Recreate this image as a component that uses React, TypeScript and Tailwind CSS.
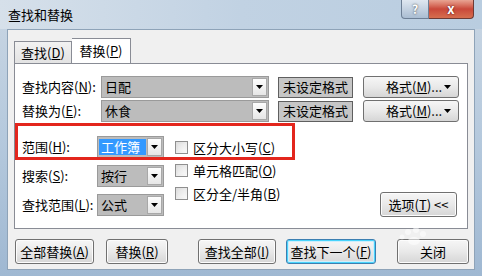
const font = { fontFamily: '"Noto Sans CJK SC", "Liberation Sans", sans-serif' };

function Arrow() {
  return (
    <svg width="7" height="4" viewBox="0 0 7 4" className="shrink-0">
      <path d="M0 0h7L3.5 4z" fill="#000" />
    </svg>
  );
}

function Combo({ text, width }: { text: string; width: string }) {
  return (
    <div className={`flex h-[22px] ${width} border border-[#9a9a9a] bg-[#bcbcbc]`}>
      <div className="flex flex-1 items-center px-[3px] text-[13px] text-black">{text}</div>
      <div className="my-[1px] mr-[1px] flex w-[15px] items-center justify-center border border-[#a8a8a8] bg-gradient-to-b from-[#fdfdfd] to-[#e6e6e6]">
        <Arrow />
      </div>
    </div>
  );
}

function Select({ text, selected }: { text: string; selected?: boolean }) {
  return (
    <div className="flex h-[22px] w-[67px] border border-[#9a9a9a] bg-[#bcbcbc]">
      <div className="flex flex-1 items-center px-[1px]">
        {selected ? (
          <span className="flex h-[16px] w-full items-center bg-[#3399ff] px-[2px] text-[13px] text-white">{text}</span>
        ) : (
          <span className="px-[2px] text-[13px] text-black">{text}</span>
        )}
      </div>
      <div className="my-[1px] mr-[1px] flex w-[15px] items-center justify-center border border-[#a8a8a8] bg-gradient-to-b from-[#fdfdfd] to-[#e6e6e6]">
        <Arrow />
      </div>
    </div>
  );
}

function Button({ children, width, focus }: { children: React.ReactNode; width: string; focus?: boolean }) {
  return (
    <div
      className={`flex h-[25px] ${width} items-center justify-center rounded-[3px] border bg-gradient-to-b from-[#f6f6f6] via-[#e9e9e9] to-[#d6d6d6] text-[13px] text-black ${
        focus
          ? "border-[#3c7fb1] shadow-[inset_0_0_0_1px_#48d3fb,inset_0_0_0_2px_#cdeefc]"
          : "border-[#707070] shadow-[inset_0_0_0_1px_#fcfcfc]"
      }`}
    >
      {children}
    </div>
  );
}

function Check({ children }: { children: React.ReactNode }) {
  return (
    <div className="flex h-[23px] items-center gap-[5px]">
      <div className="h-[13px] w-[13px] border border-[#8f8f8f] bg-gradient-to-br from-[#dcdcdc] to-[#fafafa] p-[2px]">
        <div className="h-full w-full bg-gradient-to-br from-[#e4e4e4] to-[#f7f7f7]" />
      </div>
      <span className="text-[13px] text-black">{children}</span>
    </div>
  );
}

export default function App() {
  return (
    <div className="relative h-[276px] w-[482px] overflow-hidden bg-gradient-to-b from-[#c9d6e3] via-[#b5c9dd] to-[#9fb8d2]" style={font}>
      {/* title bar */}
      <div className="flex h-[29px] items-start bg-gradient-to-r from-[#d6e0ea] via-[#c1d2e3] to-[#b9cde0]">
        <span className="ml-[8px] mt-[5px] text-[13px] text-black">查找和替换</span>
        <div className="ml-auto mr-[8px] flex">
          <div className="flex h-[19px] w-[28px] items-center justify-center rounded-bl-[4px] border border-t-0 border-[#6d7f95] bg-gradient-to-b from-[#dfe7f0] to-[#aabdd2] text-[12px] font-bold text-white [text-shadow:0_0_2px_#333]">
            ?
          </div>
          <div className="flex h-[19px] w-[45px] items-center justify-center rounded-br-[4px] border border-l-0 border-t-0 border-[#6e3b35] bg-gradient-to-b from-[#e8a493] via-[#c9483a] to-[#d66e4f] text-[13px] font-bold text-white [text-shadow:0_0_2px_#400]">
            x
          </div>
        </div>
      </div>

      {/* body */}
      <div className="mx-[7px] h-[241px] border border-[#8ea3b8] bg-[#f0f0f0] px-[6px] pt-[7px]">
        {/* tabs */}
        <div className="flex h-[26px] items-end">
          <div className="flex h-[22px] w-[58px] items-center justify-center border border-b-0 border-[#898c95] bg-gradient-to-b from-[#f2f2f2] to-[#e3e3e3] text-[13px] text-black">
            查找(<u>D</u>)
          </div>
          <div className="relative -mb-px flex h-[26px] w-[59px] items-center justify-center border border-b-0 border-l-0 border-[#898c95] bg-white pb-[2px] text-[13px] text-black">
            替换(<u>P</u>)
          </div>
        </div>

        {/* panel */}
        <div className="relative h-[166px] border border-[#898c95] bg-white pl-[7px] pt-[12px]">
          <div className="flex h-[22px] items-center">
            <span className="w-[79px] text-[13px] text-black">查找内容(<u>N</u>):</span>
            <Combo text="日配" width="w-[168px]" />
            <div className="ml-[9px] flex h-[21px] w-[75px] items-center justify-center border border-[#5f5f5f] bg-[#c6c6c6] text-[13px] text-black">
              未设定格式
            </div>
            <div className="ml-[10px] flex h-[22px] w-[96px] items-center rounded-[3px] border border-[#707070] bg-gradient-to-b from-[#f6f6f6] via-[#e9e9e9] to-[#d6d6d6] pl-[22px] pr-[7px] text-[13px] text-black">
              <span>格式(<u>M</u>)...</span>
              <span className="ml-auto"><Arrow /></span>
            </div>
          </div>
          <div className="mt-[2px] flex h-[22px] items-center">
            <span className="w-[79px] text-[13px] text-black">替换为(<u>E</u>):</span>
            <Combo text="休食" width="w-[168px]" />
            <div className="ml-[9px] flex h-[21px] w-[75px] items-center justify-center border border-[#5f5f5f] bg-[#c6c6c6] text-[13px] text-black">
              未设定格式
            </div>
            <div className="ml-[10px] flex h-[22px] w-[96px] items-center rounded-[3px] border border-[#707070] bg-gradient-to-b from-[#f6f6f6] via-[#e9e9e9] to-[#d6d6d6] pl-[22px] pr-[7px] text-[13px] text-black">
              <span>格式(<u>M</u>)...</span>
              <span className="ml-auto"><Arrow /></span>
            </div>
          </div>

          <div className="mt-[14px] flex">
            <div className="flex flex-col gap-[7px]">
              <div className="flex h-[22px] items-center">
                <span className="w-[75px] text-[13px] text-black">范围(<u>H</u>):</span>
                <Select text="工作簿" selected />
              </div>
              <div className="flex h-[22px] items-center">
                <span className="w-[75px] text-[13px] text-black">搜索(<u>S</u>):</span>
                <Select text="按行" />
              </div>
              <div className="flex h-[22px] items-center">
                <span className="w-[75px] text-[13px] text-black">查找范围(<u>L</u>):</span>
                <Select text="公式" />
              </div>
            </div>
            <div className="ml-[11px] flex flex-col">
              <Check>区分大小写(<u>C</u>)</Check>
              <Check>单元格匹配(<u>O</u>)</Check>
              <Check>区分全/半角(<u>B</u>)</Check>
            </div>
            <div className="ml-auto mr-[10px] mt-[56px]">
              <Button width="w-[77px]">
                <span className="h-[23px] leading-[23px]">选项(<u>T</u>) &lt;&lt;</span>
              </Button>
            </div>
          </div>

          {/* red annotation */}
          <div className="pointer-events-none absolute left-0 top-[59px] h-[37px] w-[280px] border-[3px] border-[#e3261d]" />
        </div>

        {/* bottom buttons */}
        <div className="mt-[10px] flex">
          <div className="ml-[1px]">
            <Button width="w-[79px]">全部替换(<u>A</u>)</Button>
          </div>
          <div className="ml-[12px]">
            <Button width="w-[62px]">替换(<u>R</u>)</Button>
          </div>
          <div className="ml-[30px]">
            <Button width="w-[78px]">查找全部(<u>I</u>)</Button>
          </div>
          <div className="ml-[10px]">
            <Button width="w-[90px]" focus>查找下一个(<u>F</u>)</Button>
          </div>
          <div className="ml-[21px]">
            <Button width="w-[72px]">关闭</Button>
          </div>
        </div>
      </div>

      {/* faint watermark paw */}
      <svg className="pointer-events-none absolute left-[368px] top-[224px]" width="80" height="44" viewBox="0 0 80 44">
        <g fill="#ffffff" opacity="0.55">
          <circle cx="40" cy="8" r="3" />
          <circle cx="48" cy="6" r="3" />
          <circle cx="55" cy="10" r="3" />
          <circle cx="34" cy="13" r="2.5" />
          <ellipse cx="46" cy="17" rx="6" ry="4" />
        </g>
      </svg>
    </div>
  );
}
